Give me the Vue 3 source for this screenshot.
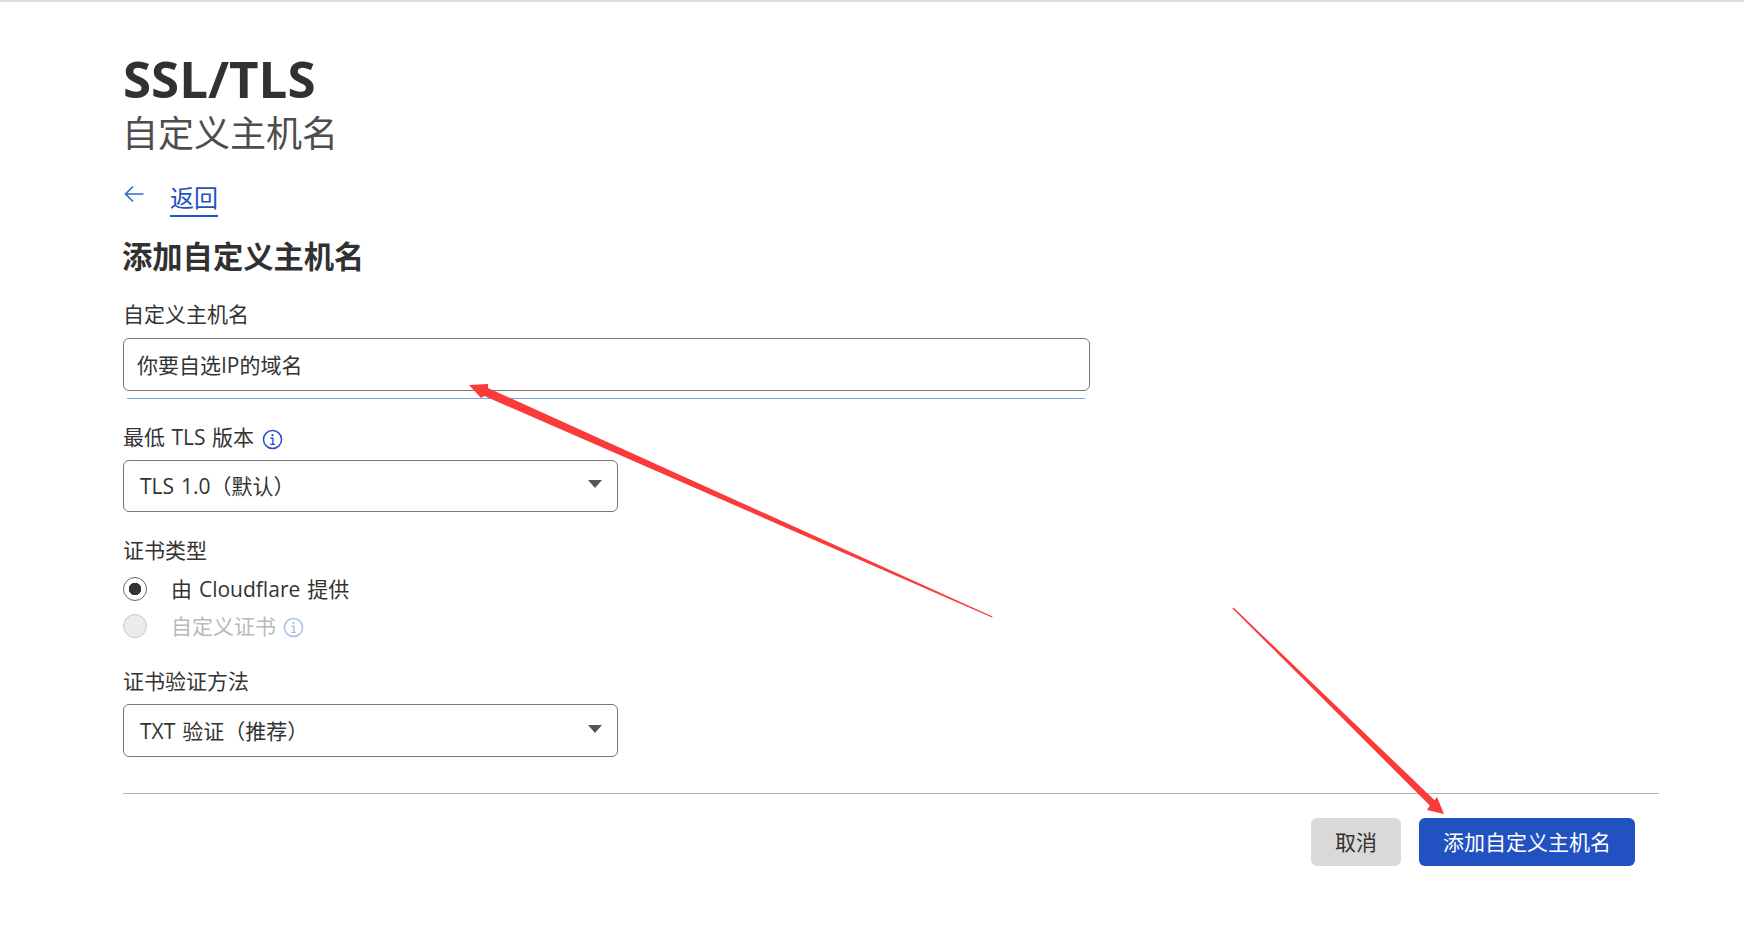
<script setup>
const arrows = [
  '469,385 488,384 488,388 992.5,616.5 992,617.5 484.4,396 481,398',
  '1444,814 1437,797 1434.6,800.2 1233.5,607.5 1232.5,608.5 1429.8,805.4 1427,810'
]
</script>

<template>
  <div class="page">
    <header class="titles">
      <h1 class="title">SSL/TLS</h1>
      <div class="subtitle">自定义主机名</div>
    </header>

    <div class="back">
      <svg class="back-icon" width="20" height="18" viewBox="0 0 20 18" fill="none">
        <path d="M19.5 9H1.5M9 1.5L1.5 9L9 16.5" stroke="#3a6ace" stroke-width="1.7" />
      </svg>
      <a class="back-link">返回</a>
    </div>

    <h2 class="heading">添加自定义主机名</h2>

    <div class="field field-host">
      <div class="label">自定义主机名</div>
      <div class="box box-wide">你要自选IP的域名</div>
      <div class="focus-line"></div>
    </div>

    <div class="field field-tls">
      <div class="label">
        <span>最低 TLS 版本</span>
        <svg class="info" width="21" height="21" viewBox="0 0 20 20" fill="none">
          <circle cx="10" cy="10" r="8.6" stroke="#2251c2" stroke-width="1.4" />
          <circle cx="10" cy="5.9" r="1.1" fill="#2251c2" />
          <path d="M8 8.8H10.4V14.4M7.8 14.6H12.4" stroke="#2251c2" stroke-width="1.3" />
        </svg>
      </div>
      <div class="box box-select">
        <span>TLS 1.0（默认）</span>
        <i class="caret"></i>
      </div>
    </div>

    <div class="field field-type">
      <div class="label">证书类型</div>
      <div class="radio-row">
        <span class="radio radio-on"></span>
        <span class="radio-text">由 Cloudflare 提供</span>
      </div>
      <div class="radio-row">
        <span class="radio radio-off"></span>
        <span class="radio-text muted">自定义证书</span>
        <svg class="info info-off" width="21" height="21" viewBox="0 0 20 20" fill="none">
          <circle cx="10" cy="10" r="8.6" stroke="#a6c0ec" stroke-width="1.4" />
          <circle cx="10" cy="5.9" r="1.1" fill="#a6c0ec" />
          <path d="M8 8.8H10.4V14.4M7.8 14.6H12.4" stroke="#a6c0ec" stroke-width="1.3" />
        </svg>
      </div>
    </div>

    <div class="field field-method">
      <div class="label">证书验证方法</div>
      <div class="box box-select box-tall">
        <span>TXT 验证（推荐）</span>
        <i class="caret"></i>
      </div>
    </div>

    <footer class="actions">
      <button class="btn btn-cancel">取消</button>
      <button class="btn btn-primary">添加自定义主机名</button>
    </footer>

    <svg class="overlay" width="1744" height="927" viewBox="0 0 1744 927">
      <polygon v-for="p in arrows" :key="p" :points="p" fill="#fb3a3a" />
    </svg>
  </div>
</template>

<style scoped>
.page {
  position: relative;
  box-sizing: border-box;
  width: 1744px;
  height: 927px;
  padding: 46px 85px 0 123px;
  border-top: 2px solid #dedede;
  background: #fff;
  color: #333;
  font-family: "Open Sans", "Noto Sans CJK SC", sans-serif;
  font-size: 21px;
  overflow: hidden;
}
.titles {
  display: flex;
  flex-direction: column;
}
.title {
  margin: 0;
  font-size: 51px;
  line-height: 60px;
  font-weight: 700;
  color: #313131;
}
.subtitle {
  margin-top: 3px;
  margin-left: -1px;
  font-size: 36px;
  line-height: 46px;
  color: #4d4d4d;
}
.back {
  display: flex;
  align-items: flex-start;
  gap: 26px;
  margin-top: 25px;
  height: 40px;
}
.back-icon {
  margin: 3px 0 0 1px;
}
.back-link {
  margin-top: -1px;
  padding-bottom: 1px;
  font-size: 24px;
  line-height: 33px;
  color: #2251c2;
  border-bottom: 2px solid #2251c2;
}
.heading {
  margin: 15px 0 0 -1px;
  font-size: 30.3px;
  line-height: 40px;
  font-weight: 700;
  color: #313131;
}
.field {
  display: flex;
  flex-direction: column;
}
.field-host {
  margin-top: 22px;
}
.field-host .label {
  margin-bottom: 9px;
}
.field-tls {
  margin-top: 23px;
}
.field-type {
  margin-top: 23px;
}
.field-type .label {
  margin-bottom: 5px;
}
.field-method {
  margin-top: 22px;
}
.label {
  display: flex;
  align-items: center;
  gap: 8px;
  height: 30px;
  line-height: 30px;
  margin-bottom: 8px;
  word-spacing: 1px;
}
.box {
  box-sizing: border-box;
  display: flex;
  align-items: center;
  justify-content: space-between;
  border: 1px solid #777;
  border-radius: 6px;
  background: #fff;
}
.box-wide {
  width: 967px;
  height: 53px;
  padding: 0 13px 2px;
}
.box-select {
  width: 495px;
  height: 52px;
  padding: 0 15px 2px 16px;
  word-spacing: 1.5px;
}
.box-tall {
  height: 53px;
}
.focus-line {
  width: 958px;
  height: 1px;
  margin: 7px 0 0 4px;
  background: #7aa7e4;
}
.caret {
  width: 0;
  height: 0;
  margin-bottom: 2px;
  border-left: 7px solid transparent;
  border-right: 7px solid transparent;
  border-top: 8px solid #555;
}
.radio-row {
  display: flex;
  align-items: center;
  height: 37px;
}
.radio {
  box-sizing: border-box;
  flex: none;
  width: 24px;
  height: 24px;
  margin-right: 24px;
  border-radius: 50%;
}
.radio-on {
  border: 1px solid #666;
  background: radial-gradient(circle, #333 0 6px, #fff 6.5px);
}
.radio-off {
  border: 1px solid #c8c8c8;
  background: #ebebeb;
}
.radio-text {
  line-height: 30px;
  word-spacing: 1.5px;
}
.muted {
  color: #b9b9b9;
}
.info {
  flex: none;
}
.info-off {
  margin: 4px 0 0 7px;
}
.label .info {
  margin: 4px 0 0 0;
}
.actions {
  display: flex;
  justify-content: flex-end;
  gap: 18px;
  margin-top: 36px;
  padding: 24px 24px 0 0;
  border-top: 1px solid #b5b5b5;
}
.btn {
  height: 48px;
  padding: 0 0 2px;
  border: 0;
  border-radius: 6px;
  font: inherit;
}
.btn-cancel {
  width: 90px;
  background: #d9d9d9;
  color: #333;
}
.btn-primary {
  width: 216px;
  background: #2251c2;
  color: #fff;
}
.overlay {
  position: absolute;
  left: 0;
  top: -2px;
  pointer-events: none;
}
</style>
